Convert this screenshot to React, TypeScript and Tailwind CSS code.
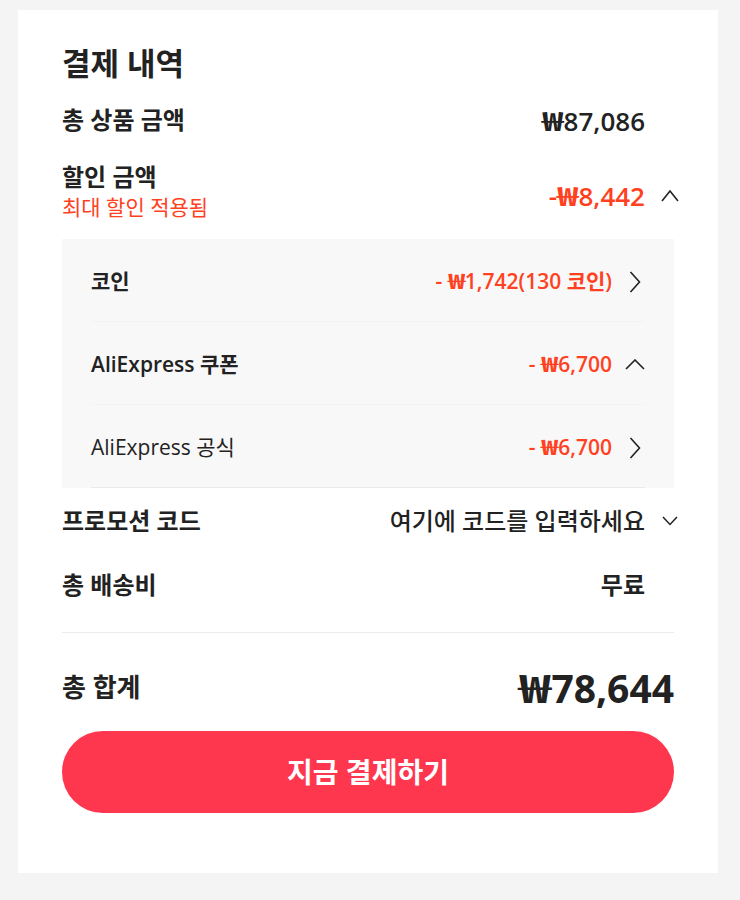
import React from "react";

const RED = "text-[#ff4122]";

function Won() {
  return (
    <span
      style={{ fontFamily: '"Noto Sans CJK KR", sans-serif' }}
      className="inline-block w-[0.82em] scale-x-[1.4] text-center font-bold"
    >
      ₩
    </span>
  );
}

function ChevronRight() {
  return (
    <svg width="12" height="22" viewBox="0 0 12 22">
      <polyline points="1.5,1 10.5,11 1.5,21" fill="none" stroke="#222" strokeWidth="1.6" />
    </svg>
  );
}

function ChevronUp({ w = 18, h = 10 }: { w?: number; h?: number }) {
  return (
    <svg width={w} height={h + 2} viewBox={`0 0 ${w} ${h + 2}`}>
      <polyline points={`1,${h + 1} ${w / 2},1 ${w - 1},${h + 1}`} fill="none" stroke="#222" strokeWidth="1.6" />
    </svg>
  );
}

function ChevronDown() {
  return (
    <svg width="16" height="10" viewBox="0 0 16 10">
      <polyline points="1,1 8,8.5 15,1" fill="none" stroke="#222" strokeWidth="1.5" />
    </svg>
  );
}

function SubRow({
  label,
  amount,
  suffix,
  bold,
  up,
  last,
}: {
  label: string;
  amount: string;
  suffix?: string;
  bold?: boolean;
  up?: boolean;
  last?: boolean;
}) {
  return (
    <div className={`flex h-[83px] items-center justify-between border-b pt-[3px] ${last ? "border-[#ebebeb]" : "border-[#f3f3f3]"}`}>
      <span className={`text-[21px] text-[#222] ${bold ? "font-semibold" : "font-normal"}`}>{label}</span>
      <div className="flex items-center">
        <span className={`text-[21px] font-semibold ${RED}`}>
          - <Won />
          {amount}
          {suffix}
        </span>
        <div className="flex w-[33px] justify-end">
          {up ? <ChevronUp w={20} h={9} /> : <div className="mr-[4px]"><ChevronRight /></div>}
        </div>
      </div>
    </div>
  );
}

export default function App() {
  return (
    <div
      className="min-h-[900px] w-[740px] bg-[#f4f4f4] pt-[10px]"
      style={{ fontFamily: '"Open Sans", "Noto Sans CJK KR", "Noto Sans", sans-serif' }}
    >
      <div className="mx-[18px] w-[700px] bg-white px-[44px] pb-[60px] pt-[33px] text-[#222]">
        <h2 className="text-[31px] font-bold leading-[40px]">결제 내역</h2>

        <div className="mt-[21px] flex h-[32px] items-center justify-between">
          <span className="text-[24px] font-semibold">총 상품 금액</span>
          <span className="mr-[29px] text-[26px] font-semibold">
            <Won />87,086
          </span>
        </div>

        <div className="mt-[25px] flex items-start justify-between">
          <div className="flex flex-col">
            <span className="text-[24px] font-semibold leading-[32px]">할인 금액</span>
            <span className={`text-[21px] leading-[28px] ${RED}`}>최대 할인 적용됨</span>
          </div>
          <div className="mr-[-5px] mt-[18px] flex items-center">
            <span className={`text-[26px] font-semibold leading-[32px] ${RED}`}>
              -<Won />8,442
            </span>
            <div className="flex w-[34px] justify-end">
              <ChevronUp w={18} h={10} />
            </div>
          </div>
        </div>

        <div className="mt-[18px] bg-[#f8f8f8] px-[29px]">
          <SubRow label="코인" amount="1,742" suffix="(130 코인)" bold />
          <SubRow label="AliExpress 쿠폰" amount="6,700" bold up />
          <SubRow label="AliExpress 공식" amount="6,700" last />
        </div>

        <div className="mt-[17px] flex h-[32px] items-center justify-between">
          <span className="text-[24px] font-semibold">프로모션 코드</span>
          <div className="mr-[-4px] flex items-center">
            <span className="text-[24px] font-medium">여기에 코드를 입력하세요</span>
            <div className="flex w-[33px] justify-end">
              <ChevronDown />
            </div>
          </div>
        </div>

        <div className="mt-[32px] flex h-[32px] items-center justify-between">
          <span className="text-[24px] font-semibold">총 배송비</span>
          <span className="mr-[29px] text-[24px] font-semibold">무료</span>
        </div>

        <div className="mt-[31px] h-px bg-[#ececec]" />

        <div className="mt-[34px] flex h-[40px] items-center justify-between">
          <span className="text-[26px] font-bold">총 합계</span>
          <span className="text-[39px] font-bold">
            <Won />78,644
          </span>
        </div>

        <button className="mt-[24px] flex h-[82px] w-full items-center justify-center rounded-full bg-[#fe374f] text-[28px] font-bold text-white">
          지금 결제하기
        </button>
      </div>
    </div>
  );
}
